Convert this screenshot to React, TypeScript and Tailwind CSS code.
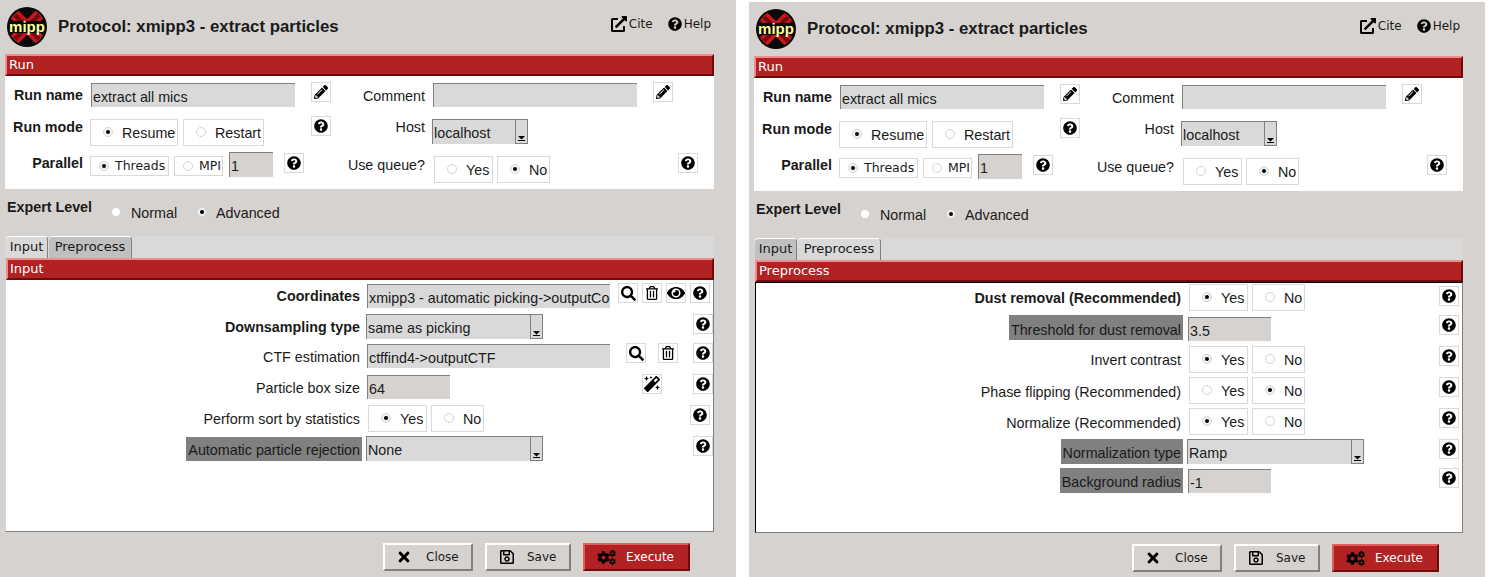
import type { ReactNode } from "react";
import {
  FaCog,
  FaExternalLinkAlt,
  FaEye,
  FaMagic,
  FaPencilAlt,
  FaQuestionCircle,
  FaRegSave,
  FaRegTrashAlt,
  FaSearch,
  FaTimes,
} from "react-icons/fa";

const sans = "[font-family:'Liberation_Sans',Arial,sans-serif]";
const dejavu = "[font-family:'DejaVu_Sans',sans-serif]";

const Logo = () => (
  <svg viewBox="0 0 40 40" className="h-10 w-10 shrink-0">
    <defs>
      <clipPath id="logo-clip">
        <circle cx="20" cy="20" r="18" />
      </clipPath>
    </defs>
    <circle cx="20" cy="20" r="20" fill="#080808" />
    <g clipPath="url(#logo-clip)">
      <path d="M5 5 35 35M35 5 5 35" stroke="#c8161c" strokeWidth="11" />
      <path d="M8 8 32 32M32 8 8 32" stroke="#6d0a0e" strokeWidth="4" />
    </g>
    <rect x="3" y="14" width="34" height="12" fill="#080808" />
    <text
      x="20"
      y="24.5"
      textAnchor="middle"
      fontSize="15"
      fontWeight="700"
      fill="#fdfd9c"
      fontFamily="'Liberation Sans', Arial, sans-serif"
    >
      mipp
    </text>
  </svg>
);

const Radio = ({ on, className }: { on?: boolean; className?: string }) => (
  <span className={`flex h-[10px] w-[10px] shrink-0 items-center justify-center rounded-full border border-[#d4d4d4] ${on ? "bg-[#f2f2f2]" : "bg-white"} ${className ?? ""}`}>
    {on && <span className="h-[4px] w-[4px] rounded-full bg-black" />}
  </span>
);

const RadioBox = ({ label, on, className }: { label: string; on?: boolean; className: string }) => (
  <div className={`flex h-[27px] items-center gap-[9px] border border-[#d9d9d9] pl-[12px] pt-[2px] text-[14.3px] ${sans} ${className}`}>
    <Radio on={on} className="mb-[3px]" />
    {label}
  </div>
);

const SmallRadio = ({ label, on, className }: { label: string; on?: boolean; className: string }) => (
  <div className={`flex h-[20px] items-center gap-[6px] border border-[#d9d9d9] pl-[8px] text-[12.5px] ${dejavu} ${className}`}>
    <Radio on={on} />
    {label}
  </div>
);

const YesNo = ({ yes, className }: { yes?: boolean; className: string }) => (
  <div className={`flex gap-[4px] ${className}`}>
    <RadioBox label="Yes" on={yes} className="w-[59px]" />
    <RadioBox label="No" on={!yes} className="w-[53px]" />
  </div>
);

const Field = ({ value, className }: { value?: string; className: string }) => (
  <div className={`h-[24px] overflow-hidden whitespace-nowrap border-l border-t border-[#808080] pl-[1px] pt-[3px] text-[14.3px] leading-[20px] ${sans} ${className}`}>
    {value}
  </div>
);

const Select = ({ value, className }: { value: string; className: string }) => (
  <div className={`flex h-[25px] border-l border-t border-[#808080] bg-[#d9d9d9] pl-[1px] text-[14.3px] leading-[26px] ${sans} ${className}`}>
    <span className="flex-1">{value}</span>
    <span className="flex h-[24px] w-[13px] items-end justify-center border-b border-l border-r border-[#808080] pb-[2px]">
      <svg viewBox="0 0 7 5" className="h-[5px] w-[7px]">
        <path d="M0 0h7L3.5 3.5zM0 4h7v1H0z" fill="#000" />
      </svg>
    </span>
  </div>
);

const IconBtn = ({ children, className }: { children: ReactNode; className: string }) => (
  <div className={`flex h-[20px] w-[20px] shrink-0 items-center justify-center border border-[#d9d9d9] bg-white text-black ${className}`}>
    {children}
  </div>
);

const Help = ({ className }: { className: string }) => (
  <IconBtn className={className}>
    <FaQuestionCircle size={14} />
  </IconBtn>
);

const Pencil = ({ className }: { className: string }) => (
  <IconBtn className={className}>
    <FaPencilAlt size={14} />
  </IconBtn>
);

const Search = ({ className }: { className: string }) => (
  <IconBtn className={className}>
    <FaSearch size={15} />
  </IconBtn>
);

const Trash = ({ className }: { className: string }) => (
  <IconBtn className={className}>
    <FaRegTrashAlt size={14} />
  </IconBtn>
);

const Bar = ({ title, className }: { title: string; className: string }) => (
  <div className={`h-[22px] border-b-2 border-l-2 border-r-2 border-t-2 border-b-[#6e0c0c] border-l-[#f28b8b] border-r-[#6e0c0c] border-t-[#f28b8b] bg-[#b22222] pl-[2px] text-[13px] leading-[18px] text-white ${dejavu} ${className}`}>
    {title}
  </div>
);

// label column: highlighted rows get the grey "expert" background
const RowLabel = ({
  text,
  bold,
  mark,
  textClass,
  className,
}: {
  text: string;
  bold?: boolean;
  mark?: boolean;
  textClass?: string;
  className: string;
}) => (
  <div className={`flex shrink-0 justify-end ${className}`}>
    <span className={`px-[2px] text-[14.3px] ${textClass ?? "h-[24px] leading-[26px]"} ${sans} ${bold ? "font-bold" : ""} ${mark ? "bg-[#808080]" : ""}`}>
      {text}
    </span>
  </div>
);

const RunPanel = () => (
  <div className={`h-[113px] w-[709px] bg-white text-[14.3px] text-[#1a1a1a] ${sans}`}>
    <div className="flex h-[38px] items-start">
      <div className="mt-[10px] w-[78px] text-right font-bold leading-[18px]">Run name</div>
      <Field value="extract all mics" className="ml-[8px] mt-[7px] w-[204px] bg-[#d9d9d9]" />
      <Pencil className="ml-[16px] mt-[6px]" />
      <div className="mt-[11px] w-[94px] text-right leading-[18px]">Comment</div>
      <Field className="ml-[8px] mt-[7px] w-[204px] bg-[#d9d9d9]" />
      <Pencil className="ml-[16px] mt-[6px]" />
    </div>
    <div className="flex h-[38px] items-start">
      <div className="mt-[4px] w-[78px] text-right font-bold leading-[18px]">Run mode</div>
      <RadioBox label="Resume" on className="ml-[7px] mt-[5px] w-[88px]" />
      <RadioBox label="Restart" className="ml-[5px] mt-[5px] w-[81px]" />
      <Help className="ml-[47px] mt-[2px]" />
      <div className="mt-[4px] w-[94px] text-right leading-[18px]">Host</div>
      <Select value="localhost" className="ml-[7px] mt-[5px] w-[96px]" />
    </div>
    <div className="flex h-[37px] items-start">
      <div className="mt-[2px] w-[78px] text-right font-bold leading-[18px]">Parallel</div>
      <SmallRadio label="Threads" on className="ml-[7px] mt-[4px] w-[79px]" />
      <SmallRadio label="MPI" className="ml-[5px] mt-[4px] w-[49px]" />
      <Field value="1" className="ml-[6px] h-[25px] w-[44px] bg-[#d6d2d0]" />
      <Help className="ml-[11px] mt-[1px]" />
      <div className="mt-[4px] w-[121px] text-right leading-[18px]">Use queue?</div>
      <YesNo className="ml-[9px] mt-[4px]" />
      <Help className="ml-[128px] mt-[1px]" />
    </div>
  </div>
);

const ExpertRow = () => (
  <div className={`flex h-[47px] items-start text-[14.3px] text-[#1a1a1a] ${sans}`}>
    <div className="ml-[2px] mt-[9px] w-[104px] font-bold leading-[18px]">Expert Level</div>
    <div className="mt-[16px] flex h-[18px] items-center">
      <Radio className="mb-[4px]" />
      <span className="ml-[10px]">Normal</span>
      <span className="ml-[20px]">
        <Radio on className="mb-[4px]" />
      </span>
      <span className="ml-[9px]">Advanced</span>
    </div>
  </div>
);

const Tabs = ({ active }: { active: "Input" | "Preprocess" }) => {
  const base = `h-[22px] rounded-t-[4px] border-r border-t border-[#808080] border-t-white text-center text-[13px] leading-[19px] ${dejavu}`;
  return (
    <div className="flex h-[22px] w-[709px] bg-[#d9d9d9] pl-px text-[#1a1a1a]">
      <div className={`${base} w-[42px] ${active === "Input" ? "bg-[#d9d9d9]" : "bg-[#c0c0c0]"}`}>Input</div>
      <div className={`${base} ml-px w-[83px] ${active === "Preprocess" ? "bg-[#d9d9d9]" : "bg-[#c0c0c0]"}`}>Preprocess</div>
    </div>
  );
};

const ActionBar = () => {
  const btn = `flex h-[28px] items-center border-b-2 border-l-2 border-r-2 border-t-2 text-[12px] ${dejavu}`;
  const plain = "border-b-[#808080] border-l-white border-r-[#808080] border-t-white text-[#1a1a1a]";
  return (
    <div className="ml-[383px] mt-[11px] flex gap-[12px]">
      <div className={`${btn} ${plain} w-[90px] pl-[11px]`}>
        <FaTimes size={16} className="text-black" />
        <span className="ml-[14px]">Close</span>
      </div>
      <div className={`${btn} ${plain} w-[86px] pl-[12px]`}>
        <FaRegSave size={16} className="text-black" />
        <span className="ml-[12px]">Save</span>
      </div>
      <div className={`${btn} w-[107px] border-b-[#6e0c0c] border-l-[#e25c5c] border-r-[#6e0c0c] border-t-[#e25c5c] bg-[#b22222] pl-[12px] text-white`}>
        <span className="flex items-center text-black">
          <FaCog size={13} />
          <span className="-ml-px flex flex-col">
            <FaCog size={7} />
            <FaCog size={7} className="mt-px" />
          </span>
        </span>
        <span className="ml-[10px]">Execute</span>
      </div>
    </div>
  );
};

const InputBody = () => (
  <div className="h-[252px] w-[709px] border-b border-l border-r border-b-[#808080] border-l-[#d9d9d9] border-r-[#808080] bg-white text-[#1a1a1a]">
    <div className="flex h-[31px] items-start">
      <RowLabel text="Coordinates" bold className="mt-[3px] w-[356px]" />
      <Field value="xmipp3 - automatic picking->outputCoordinates" className="ml-[5px] mt-[4px] w-[243px] bg-[#d9d9d9]" />
      <Search className="ml-[8px] mt-[3px]" />
      <Trash className="ml-[4px] mt-[3px]" />
      <IconBtn className="ml-[4px] mt-[3px]">
        <FaEye size={18} />
      </IconBtn>
      <Help className="ml-[4px] mt-[3px]" />
    </div>
    <div className="flex h-[30px] items-start">
      <RowLabel text="Downsampling type" bold className="mt-[3px] w-[356px]" />
      <Select value="same as picking" className="ml-[4px] mt-[3px] w-[177px]" />
      <Help className="ml-auto mt-[3px]" />
    </div>
    <div className="flex h-[31px] items-start">
      <RowLabel text="CTF estimation" className="mt-[3px] w-[356px]" />
      <Field value="ctffind4->outputCTF" className="ml-[5px] mt-[3px] w-[243px] bg-[#d9d9d9]" />
      <Search className="ml-[16px] mt-[2px]" />
      <Trash className="ml-[12px] mt-[2px]" />
      <Help className="ml-auto mt-[2px]" />
    </div>
    <div className="flex h-[31px] items-start">
      <RowLabel text="Particle box size" className="mt-[3px] w-[356px]" />
      <Field value="64" className="ml-[5px] mt-[3px] w-[83px] bg-[#d6d2d0]" />
      <IconBtn className="ml-[192px] mt-[2px]">
        <FaMagic size={16} />
      </IconBtn>
      <Help className="ml-auto mt-[2px]" />
    </div>
    <div className="flex h-[31px] items-start">
      <RowLabel text="Perform sort by statistics" className="mt-[3px] w-[356px]" />
      <YesNo yes className="ml-[6px] mt-[2px]" />
      <Help className="ml-auto mr-[3px] mt-[2px]" />
    </div>
    <div className="flex h-[30px] items-start">
      <RowLabel text="Automatic particle rejection" mark className="mt-[3px] w-[356px]" />
      <Select value="None" className="ml-[4px] mt-[2px] w-[177px]" />
      <Help className="ml-auto mt-[2px]" />
    </div>
  </div>
);

const PreprocessBody = () => (
  <div className="ml-px h-[251px] w-[708px] border-b border-l border-r border-t border-b-[#808080] border-l-black border-r-[#808080] border-t-black bg-white text-[#1a1a1a]">
    <div className="flex h-[32px] items-start">
      <RowLabel text="Dust removal (Recommended)" bold className="mt-[2px] w-[427px]" />
      <YesNo yes className="ml-[6px] mt-px" />
      <Help className="ml-auto mr-[3px] mt-[3px]" />
    </div>
    <div className="flex h-[31px] items-start">
      <RowLabel text="Threshold for dust removal" mark textClass="h-[25px] leading-[30px]" className="w-[427px]" />
      <Field value="3.5" className="ml-[5px] mt-[2px] w-[83px] bg-[#d6d2d0]" />
      <Help className="ml-auto mr-[3px]" />
    </div>
    <div className="flex h-[31px] items-start">
      <RowLabel text="Invert contrast" className="mt-px w-[427px]" />
      <YesNo yes className="ml-[6px]" />
      <Help className="ml-auto mr-[3px]" />
    </div>
    <div className="flex h-[31px] items-start">
      <RowLabel text="Phase flipping (Recommended)" className="mt-[2px] w-[427px]" />
      <YesNo className="ml-[6px]" />
      <Help className="ml-auto mr-[3px]" />
    </div>
    <div className="flex h-[31px] items-start">
      <RowLabel text="Normalize (Recommended)" className="mt-[2px] w-[427px]" />
      <YesNo yes className="ml-[6px]" />
      <Help className="ml-auto mr-[3px]" />
    </div>
    <div className="flex h-[29px] items-start">
      <RowLabel text="Normalization type" mark textClass="h-[25px] leading-[28px]" className="w-[427px]" />
      <Select value="Ramp" className="ml-[4px] w-[177px]" />
      <Help className="ml-auto mr-[3px]" />
    </div>
    <div className="flex h-[30px] items-start">
      <RowLabel text="Background radius" mark textClass="h-[25px] leading-[28px]" className="w-[427px]" />
      <Field value="-1" className="ml-[5px] mt-px w-[83px] bg-[#d6d2d0]" />
      <Help className="ml-auto mr-[3px]" />
    </div>
  </div>
);

const ProtocolWindow = ({ active, className }: { active: "Input" | "Preprocess"; className: string }) => (
  <div className={`w-[736px] shrink-0 bg-[#d6d2d0] ${className}`}>
    {/* title and links */}
    <div className="flex h-[54px] items-start text-[#1a1a1a]">
      <div className="ml-[7px] mt-[7px]">
        <Logo />
      </div>
      <div className={`ml-[11px] mt-[17px] text-[16.8px] font-bold leading-[20px] ${sans}`}>
        Protocol: xmipp3 - extract particles
      </div>
      <div className={`ml-auto mr-[25px] mt-[15px] flex items-center text-[12px] ${dejavu}`}>
        <FaExternalLinkAlt size={16} className="text-black" />
        <span className="ml-[2px]">Cite</span>
        <FaQuestionCircle size={14} className="ml-[15px] text-black" />
        <span className="ml-[2px]">Help</span>
      </div>
    </div>

    <div className="ml-[5px]">
      <Bar title="Run" className="w-[709px]" />
      <RunPanel />
      <ExpertRow />
      <Tabs active={active} />
      <Bar title={active} className="ml-px w-[708px]" />
      {active === "Input" ? <InputBody /> : <PreprocessBody />}
    </div>

    <ActionBar />
  </div>
);

const App = () => (
  <div className="flex h-[577px] w-[1500px] items-start overflow-hidden bg-white text-[#1a1a1a]">
    <ProtocolWindow active="Input" className="h-[577px]" />
    <ProtocolWindow active="Preprocess" className="ml-[13px] mt-[2px] h-[575px]" />
  </div>
);

export default App;
